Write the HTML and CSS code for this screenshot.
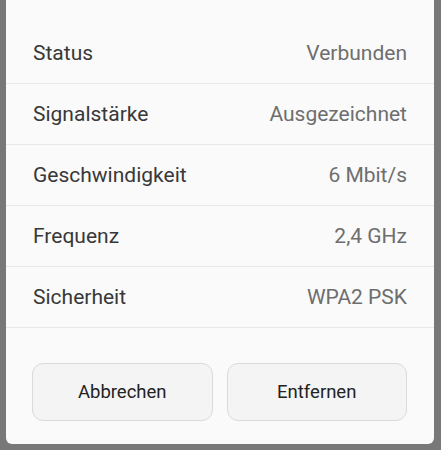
FILE: index.html
```html
<!DOCTYPE html>
<html lang="de">
<head>
<meta charset="utf-8">
<link rel="stylesheet" href="styles.css">
</head>
<body>
<div class="backdrop">
  <div class="dialog">
    <div class="rows">
      <div class="row"><span class="label">Status</span><span class="value">Verbunden</span></div>
      <div class="row"><span class="label">Signalstärke</span><span class="value">Ausgezeichnet</span></div>
      <div class="row"><span class="label">Geschwindigkeit</span><span class="value">6 Mbit/s</span></div>
      <div class="row"><span class="label">Frequenz</span><span class="value">2,4 GHz</span></div>
      <div class="row"><span class="label">Sicherheit</span><span class="value">WPA2 PSK</span></div>
    </div>
    <div class="actions">
      <button class="btn">Abbrechen</button>
      <button class="btn">Entfernen</button>
    </div>
  </div>
</div>
</body>
</html>
```
FILE: styles.css
```css
html, body {
  margin: 0;
  padding: 0;
  background: #787878;
}
.backdrop {
  width: 441px;
  height: 450px;
  overflow: hidden;
  background: #787878;
}
.dialog {
  margin-left: 6px;
  width: 428px;
  background: #fafafa;
  border-radius: 0 0 6px 6px;
  padding-top: 23px;
  padding-bottom: 23px;
  font-family: Roboto, "Noto Sans", sans-serif;
}
.rows {
  display: flex;
  flex-direction: column;
}
.row {
  display: flex;
  justify-content: space-between;
  align-items: center;
  height: 60px;
  padding: 0 27px;
  border-bottom: 1px solid #e8e8e8;
  font-size: 21px;
}
.label {
  color: #383838;
}
.value {
  color: #6e6e6e;
}
.actions {
  display: flex;
  gap: 14px;
  padding: 35px 27px 0 26px;
}
.btn {
  flex: 1;
  height: 58px;
  border: 1px solid #dadada;
  border-radius: 11px;
  background: #f4f4f4;
  color: #222222;
  font-family: Roboto, "Noto Sans", sans-serif;
  font-size: 18.5px;
  padding: 0;
}
```
